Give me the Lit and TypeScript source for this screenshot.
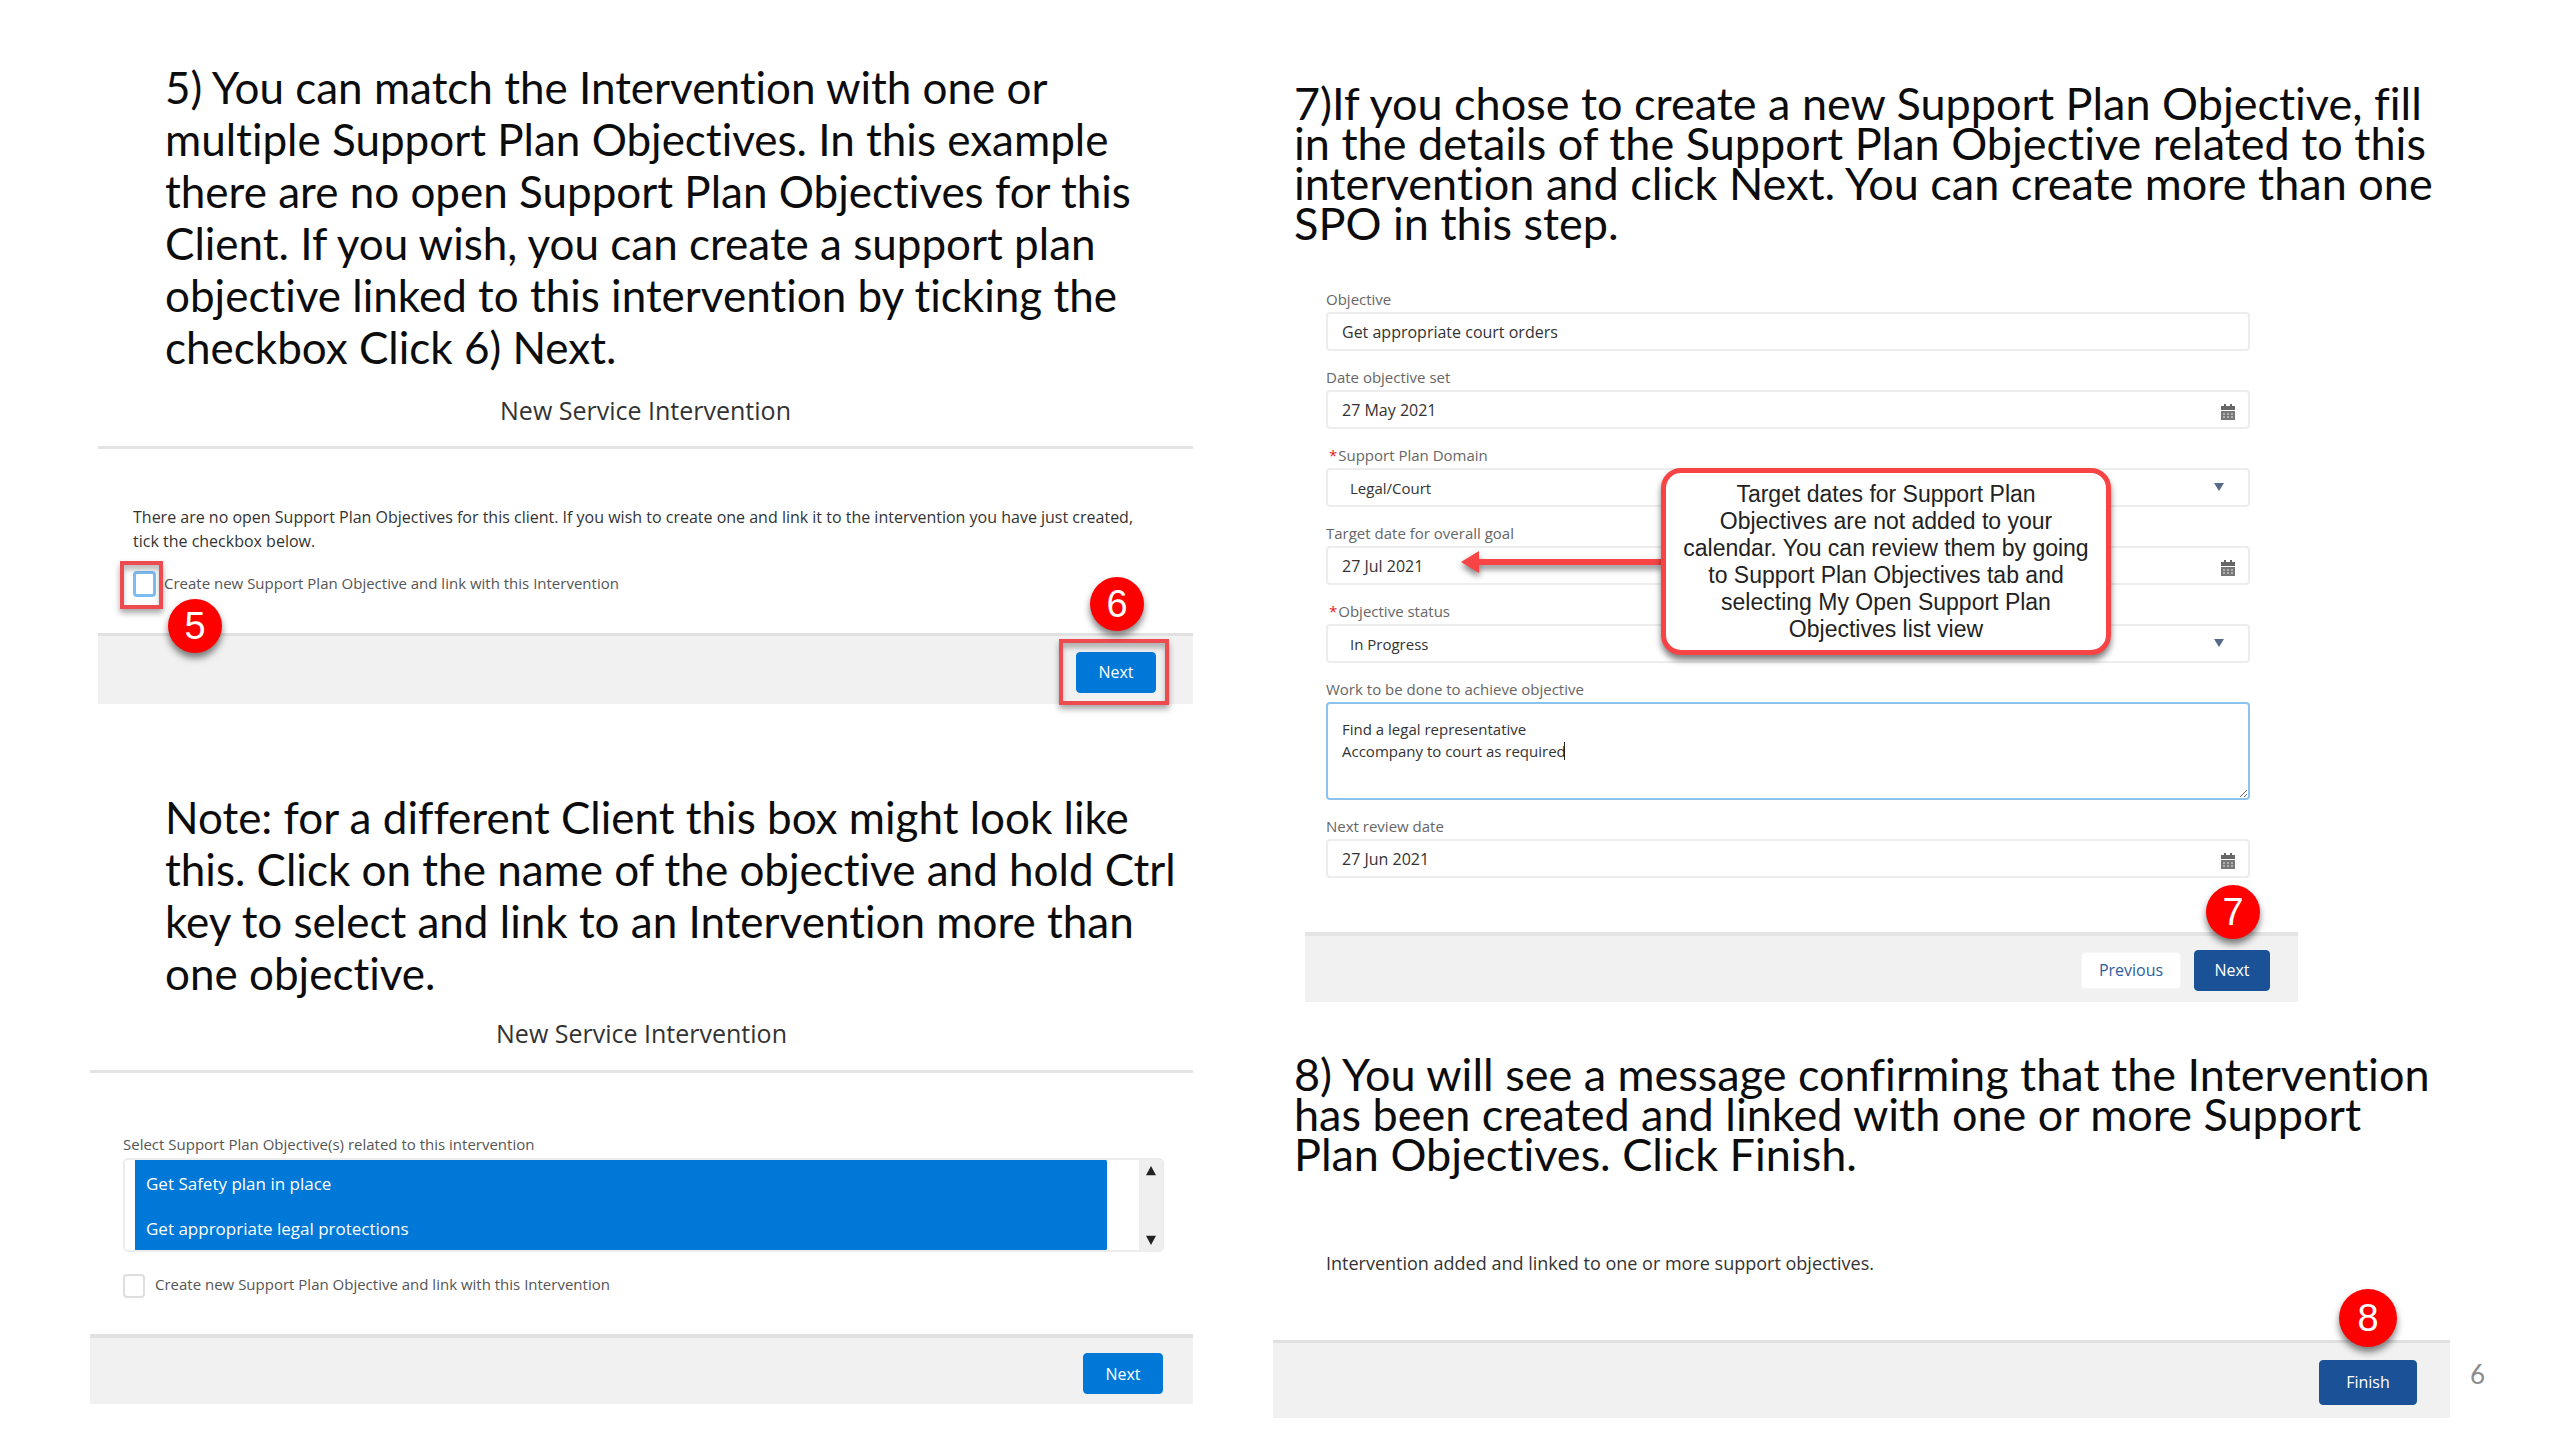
import { LitElement, html, css, svg } from "lit";
import { customElement, property } from "lit/decorators.js";

const controls = css`
  * {
    box-sizing: border-box;
  }
  button,
  input,
  select,
  textarea {
    font-family: inherit;
    margin: 0;
  }
  .button {
    height: 41px;
    min-width: 80px;
    padding: 0 16px;
    border: 1px solid #0078d7;
    border-radius: 4px;
    background: #0078d7;
    color: #fff;
    font-size: 16px;
    line-height: 24px;
  }
  .button.dark {
    min-width: 76px;
    border-color: #1b5297;
    background: #1b5297;
  }
  .button.plain {
    height: 37px;
    min-width: 100px;
    border-color: #f6f6f6;
    background: #fff;
    color: #2f5d9b;
  }
  .button.wide {
    height: 45px;
    min-width: 98px;
  }
`;

@customElement("step-badge")
class StepBadge extends LitElement {
  @property() label = "";

  static styles = css`
    :host {
      display: flex;
      align-items: center;
      justify-content: center;
      width: 54px;
      height: 54px;
      border-radius: 50%;
      background: #fe0000;
      box-shadow: 0 5px 7px rgba(0, 0, 0, 0.5);
      color: #fff;
      font-family: "Liberation Sans", Arial, sans-serif;
      font-size: 38px;
      line-height: 54px;
    }
  `;

  render() {
    return html`${this.label}`;
  }
}

@customElement("objective-prompt")
class ObjectivePrompt extends LitElement {
  static styles = [
    controls,
    css`
      :host {
        display: block;
      }
      .title {
        margin: 0;
        padding-bottom: 19px;
        border-bottom: 3px solid #e4e4e4;
        text-align: center;
        font-size: 25px;
        font-weight: 400;
        line-height: 34px;
        color: #333;
      }
      .body {
        padding: 56px 0 38px 35px;
      }
      .message {
        margin: 0 0 18px;
        font-size: 16px;
        line-height: 24px;
        color: #333;
        white-space: nowrap;
      }
      .check {
        position: relative;
        display: flex;
        align-items: center;
        gap: 8px;
        font-size: 15px;
        line-height: 24px;
        color: #555;
      }
      .box {
        appearance: none;
        width: 23px;
        height: 26px;
        margin: 0 0 -2px;
        border: 3px solid #7dbcf2;
        border-radius: 4px;
        background: #fff;
      }
      .frame {
        position: absolute;
        border: 4px solid #ee4b50;
        box-shadow: 0 4px 6px rgba(0, 0, 0, 0.35), inset 0 5px 5px rgba(0, 0, 0, 0.25);
        pointer-events: none;
      }
      .frame.tick {
        left: -13px;
        top: -10px;
        width: 43px;
        height: 48px;
      }
      .frame.action {
        inset: -13px -13px -12px -17px;
      }
      .five {
        position: absolute;
        left: 35px;
        top: 28px;
      }
      .footer {
        display: flex;
        justify-content: flex-end;
        align-items: center;
        height: 71px;
        padding: 4px 37px 0 0;
        border-top: 3px solid #e1e1e1;
        background: #f1f1f1;
      }
      .action-wrap {
        position: relative;
        display: flex;
      }
      .six {
        position: absolute;
        right: 12px;
        top: -75px;
      }
    `,
  ];

  render() {
    return html`
      <h2 class="title">New Service Intervention</h2>
      <div class="body">
        <p class="message">
          There are no open Support Plan Objectives for this client. If you wish to create one and link it to the
          intervention you have just created,<br />tick the checkbox below.
        </p>
        <div class="check">
          <input class="box" id="create" type="checkbox" />
          <label for="create">Create new Support Plan Objective and link with this Intervention</label>
          <span class="frame tick"></span>
          <step-badge class="five" label="5"></step-badge>
        </div>
      </div>
      <div class="footer">
        <div class="action-wrap">
          <button class="button" type="button">Next</button>
          <span class="frame action"></span>
          <step-badge class="six" label="6"></step-badge>
        </div>
      </div>
    `;
  }
}

@customElement("objective-picker")
class ObjectivePicker extends LitElement {
  static styles = [
    controls,
    css`
      :host {
        display: block;
      }
      .title {
        margin: 0;
        padding-bottom: 20px;
        border-bottom: 3px solid #e4e4e4;
        text-align: center;
        font-size: 25px;
        font-weight: 400;
        line-height: 34px;
        color: #333;
      }
      .body {
        padding: 60px 29px 38px 33px;
      }
      .label {
        display: block;
        margin-bottom: 3px;
        font-size: 15px;
        line-height: 22px;
        color: #555;
      }
      .list {
        display: flex;
        height: 94px;
        margin-bottom: 20px;
        border: 2px solid #ececec;
        border-radius: 5px;
        overflow: hidden;
      }
      .options {
        flex: 1;
        height: 90px;
        padding: 0 0 0 10px;
        margin-right: 32px;
        border: 0;
        outline: 0;
        background: #fff;
        overflow: hidden;
        font-size: 17px;
      }
      .options option {
        height: 45px;
        min-height: 45px;
        padding: 12px 11px 9px;
        line-height: 24px;
        background: #0078d7 linear-gradient(#0078d7, #0078d7);
        color: #fff;
        -webkit-text-fill-color: #fff;
      }
      .rail {
        display: flex;
        flex-direction: column;
        justify-content: space-between;
        align-items: center;
        width: 23px;
        padding: 6px 0 5px;
        background: #efefef;
      }
      .check {
        display: flex;
        align-items: center;
        gap: 10px;
        font-size: 15px;
        line-height: 24px;
        color: #555;
      }
      .box {
        appearance: none;
        width: 22px;
        height: 24px;
        margin: 2px 0 -2px;
        border: 2px solid #dedede;
        border-radius: 4px;
        background: #fff;
      }
      .footer {
        display: flex;
        justify-content: flex-end;
        align-items: center;
        height: 70px;
        padding: 5px 30px 0 0;
        border-top: 4px solid #e1e1e1;
        background: #f1f1f1;
      }
    `,
  ];

  render() {
    return html`
      <h2 class="title">New Service Intervention</h2>
      <div class="body">
        <label class="label" for="objectives">Select Support Plan Objective(s) related to this intervention</label>
        <div class="list">
          <select class="options" id="objectives" multiple size="2">
            <option selected>Get Safety plan in place</option>
            <option selected>Get appropriate legal protections</option>
          </select>
          <div class="rail">
            <svg width="12" height="10" viewBox="0 0 14 12"><path d="M7 0 13 11H1Z" fill="#222" /></svg>
            <svg width="12" height="10" viewBox="0 0 14 12"><path d="M1 1H13L7 12Z" fill="#222" /></svg>
          </div>
        </div>
        <div class="check">
          <input class="box" id="create" type="checkbox" />
          <label for="create">Create new Support Plan Objective and link with this Intervention</label>
        </div>
      </div>
      <div class="footer"><button class="button" type="button">Next</button></div>
    `;
  }
}

type Field = { id: string; label: string; value: string; kind: "text" | "date" | "select" | "area"; required?: boolean };

const fields: Field[] = [
  { id: "objective", label: "Objective", value: "Get appropriate court orders", kind: "text" },
  { id: "date-set", label: "Date objective set", value: "27 May 2021", kind: "date" },
  { id: "domain", label: "Support Plan Domain", value: "Legal/Court", kind: "select", required: true },
  { id: "target", label: "Target date for overall goal", value: "27 Jul 2021", kind: "date" },
  { id: "status", label: "Objective status", value: "In Progress", kind: "select", required: true },
  {
    id: "work",
    label: "Work to be done to achieve objective",
    value: "Find a legal representative\nAccompany to court as required",
    kind: "area",
  },
  { id: "review", label: "Next review date", value: "27 Jun 2021", kind: "date" },
];

const calendarIcon = svg`
  <path d="M4 0h2v3H4zM10 0h2v3h-2zM1 2h14v4H1z" fill="#666" />
  <path d="M1 7h14v9H1z" fill="#777" />
  <path d="M3 9h2v2H3zM7 9h2v2H7zM11 9h2v2h-2zM3 12h2v2H3zM7 12h2v2H7zM11 12h2v2h-2z" fill="#b0b0b0" />
`;

@customElement("objective-form")
class ObjectiveForm extends LitElement {
  static styles = [
    controls,
    css`
      :host {
        display: block;
      }
      .fields {
        position: relative;
        display: grid;
        gap: 18px;
        padding: 0 48px 54px 21px;
      }
      .field {
        display: grid;
        gap: 5px;
      }
      .label {
        font-size: 15px;
        line-height: 16px;
        color: #666;
      }
      .star {
        padding: 0 1px 0 3px;
        color: #d22;
      }
      .control {
        position: relative;
        display: flex;
      }
      .entry {
        appearance: none;
        flex: 1;
        min-width: 0;
        height: 39px;
        padding: 0 14px;
        border: 2px solid #ededed;
        border-radius: 4px;
        outline: 0;
        background: #fff;
        color: #333;
        font-size: 16px;
        line-height: 22px;
      }
      .entry.choice {
        padding-left: 22px;
        font-size: 15px;
      }
      .entry.area {
        height: 98px;
        padding: 14px;
        border-color: #8cc2ee;
        font-size: 15px;
        resize: vertical;
      }
      .caret {
        position: absolute;
        left: 238px;
        top: 40px;
        width: 1px;
        height: 18px;
        background: #222;
      }
      .icon {
        position: absolute;
        right: 14px;
        top: 14px;
      }
      .arrow {
        position: absolute;
        right: 26px;
        top: 15px;
      }
      .callout {
        position: absolute;
        left: 356px;
        top: 177px;
        width: 450px;
        padding: 8px 8px 7px;
        border: 5px solid #f84444;
        border-radius: 20px;
        background: #fff;
        box-shadow: 0 5px 6px rgba(0, 0, 0, 0.5);
        color: #222;
        text-align: center;
        white-space: nowrap;
        font-family: "Liberation Sans", Arial, sans-serif;
        font-size: 23px;
        line-height: 27px;
      }
      .pointer {
        position: absolute;
        left: 156px;
        top: 256px;
        filter: drop-shadow(0 4px 3px rgba(0, 0, 0, 0.5));
      }
      .footer {
        position: relative;
        display: flex;
        justify-content: flex-end;
        align-items: center;
        gap: 13px;
        height: 70px;
        padding: 2px 28px 0 0;
        border-top: 4px solid #e4e4e4;
        background: #f1f1f1;
      }
      .seven {
        position: absolute;
        right: 38px;
        top: -51px;
      }
    `,
  ];

  private control(f: Field) {
    switch (f.kind) {
      case "text":
        return html`<input class="entry" id=${f.id} type="text" .value=${f.value} />`;
      case "date":
        return html`<input class="entry" id=${f.id} type="text" .value=${f.value} />
          <svg class="icon" width="16" height="17" viewBox="0 0 16 17">${calendarIcon}</svg>`;
      case "select":
        return html`<select class="entry choice" id=${f.id}><option>${f.value}</option></select>
          <svg class="arrow" width="10" height="8" viewBox="0 0 10 8"><path d="M0 0H10L5 8Z" fill="#596a89" /></svg>`;
      case "area":
        return html`<textarea class="entry area" id=${f.id} .value=${f.value}></textarea><span class="caret"></span>`;
    }
  }

  render() {
    return html`
      <div class="fields">
        ${fields.map(
          (f) => html`<div class="field">
            <label class="label" for=${f.id}>${f.required ? html`<span class="star">*</span>` : ""}${f.label}</label>
            <div class="control">${this.control(f)}</div>
          </div>`
        )}
        <svg class="pointer" width="202" height="30" viewBox="0 0 202 30">
          <path d="M0 15 18 4V12H202V18H18V26Z" fill="#f84444" />
        </svg>
        <div class="callout">
          Target dates for Support Plan<br />Objectives are not added to your<br />calendar. You can review them by
          going<br />to Support Plan Objectives tab and<br />selecting My Open Support Plan<br />Objectives list view
        </div>
      </div>
      <div class="footer">
        <button class="button plain" type="button">Previous</button>
        <button class="button dark" type="button">Next</button>
        <step-badge class="seven" label="7"></step-badge>
      </div>
    `;
  }
}

@customElement("finish-panel")
class FinishPanel extends LitElement {
  static styles = [
    controls,
    css`
      :host {
        display: block;
      }
      .message {
        margin: 0;
        padding: 77px 0 65px 53px;
        font-size: 18px;
        line-height: 24px;
        color: #333;
      }
      .footer {
        position: relative;
        display: flex;
        justify-content: flex-end;
        align-items: center;
        height: 78px;
        padding: 3px 33px 0 0;
        border-top: 3px solid #e0e0e0;
        background: #f1f1f1;
      }
      .eight {
        position: absolute;
        right: 53px;
        top: -54px;
        width: 58px;
        height: 58px;
      }
    `,
  ];

  render() {
    return html`
      <p class="message">Intervention added and linked to one or more support objectives.</p>
      <div class="footer">
        <button class="button dark wide" type="button">Finish</button>
        <step-badge class="eight" label="8"></step-badge>
      </div>
    `;
  }
}

@customElement("app-root")
class AppRoot extends LitElement {
  static styles = css`
    :host {
      display: block;
      background: #fff;
      font-family: "Open Sans", "Noto Sans", sans-serif;
    }
    .slide {
      display: grid;
      grid-template-columns: 1103fr 1177fr;
      column-gap: 80px;
      min-height: 100vh;
      padding: 0 110px 0 90px;
      position: relative;
    }
    .text {
      margin: 0;
      font-family: Lato, Carlito, Calibri, sans-serif;
      font-size: 44px;
      font-variant-ligatures: none;
      line-height: 52px;
      color: #0c0c0c;
      white-space: nowrap;
    }
    .left {
      padding-top: 61px;
    }
    .left .text {
      padding-left: 75px;
    }
    .right {
      padding-top: 83px;
    }
    .right .text {
      padding-left: 21px;
      font-size: 45px;
      line-height: 40px;
    }
    .prompt {
      margin: 20px 0 87px 8px;
    }
    .picker {
      margin-top: 17px;
    }
    .form {
      margin: 48px 152px 52px 32px;
    }
    .number {
      position: absolute;
      right: 75px;
      bottom: 49px;
      font-family: Lato, Carlito, Calibri, sans-serif;
      font-size: 26px;
      line-height: 34px;
      color: #8b8b8b;
    }
  `;

  render() {
    return html`
      <main class="slide">
        <section class="left">
          <p class="text">
            5) You can match the Intervention with one or<br />multiple Support Plan Objectives. In this example<br />there
            are no open Support Plan Objectives for this<br />Client. If you wish, you can create a support plan<br />objective
            linked to this intervention by ticking the<br />checkbox Click 6) Next.
          </p>
          <objective-prompt class="prompt"></objective-prompt>
          <p class="text">
            Note: for a different Client this box might look like<br />this. Click on the name of the objective and hold
            Ctrl<br />key to select and link to an Intervention more than<br />one objective.
          </p>
          <objective-picker class="picker"></objective-picker>
        </section>
        <section class="right">
          <p class="text">
            7)If you chose to create a new Support Plan Objective, fill<br />in the details of the Support Plan Objective
            related to this<br />intervention and click Next. You can create more than one<br />SPO in this step.
          </p>
          <objective-form class="form"></objective-form>
          <p class="text">
            8) You will see a message confirming that the Intervention<br />has been created and linked with one or more
            Support<br />Plan Objectives. Click Finish.
          </p>
          <finish-panel></finish-panel>
        </section>
        <span class="number">6</span>
      </main>
    `;
  }
}
